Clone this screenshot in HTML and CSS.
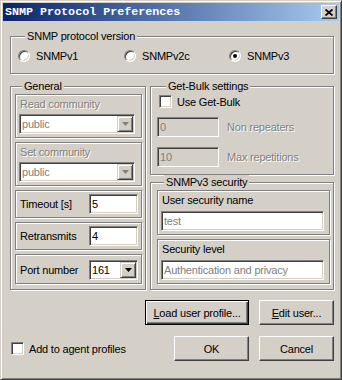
FILE: index.html
```html
<!DOCTYPE html>
<html>

<head>
    <meta charset="UTF-8">
    <title>SNMP Protocol Preferences</title>
    <link rel="stylesheet" href="styles.css">
</head>

<body>
    <div class="window">
        <div class="titlebar">
            <span class="title">SNMP Protocol Preferences</span>
            <span class="close">
                <svg width="8" height="7" viewBox="0 0 8 7">
                    <path d="M0.5 0.5 L7.5 6.5 M7.5 0.5 L0.5 6.5" stroke="#000" stroke-width="1.7" />
                </svg>
            </span>
        </div>

        <div class="client">
            <fieldset class="group version">
                <legend>SNMP protocol version</legend>
                <div class="radios">
                    <label class="option"><span class="radio"></span>SNMPv1</label>
                    <label class="option"><span class="radio"></span>SNMPv2c</label>
                    <label class="option"><span class="radio checked"></span>SNMPv3</label>
                </div>
            </fieldset>

            <div class="middle">
                <fieldset class="group general">
                    <legend>General</legend>
                    <div class="frame stacked first">
                        <span class="muted">Read community</span>
                        <div class="combo wide">
                            <span class="value muted-value">public</span>
                            <span class="drop off"><svg width="7" height="4" viewBox="0 0 7 4"><polygon points="0,0 7,0 3.5,4" /></svg></span>
                        </div>
                    </div>
                    <div class="frame stacked">
                        <span class="muted">Set community</span>
                        <div class="combo wide">
                            <span class="value muted-value">public</span>
                            <span class="drop off"><svg width="7" height="4" viewBox="0 0 7 4"><polygon points="0,0 7,0 3.5,4" /></svg></span>
                        </div>
                    </div>
                    <div class="frame inline">
                        <span>Timeout [s]</span>
                        <div class="edit short">5</div>
                    </div>
                    <div class="frame inline">
                        <span>Retransmits</span>
                        <div class="edit short">4</div>
                    </div>
                    <div class="frame inline port">
                        <span>Port number</span>
                        <div class="combo short">
                            <span class="value">161</span>
                            <span class="drop"><svg width="7" height="4" viewBox="0 0 7 4"><polygon points="0,0 7,0 3.5,4" /></svg></span>
                        </div>
                    </div>
                </fieldset>

                <div class="right-col">
                    <fieldset class="group bulk">
                        <legend>Get-Bulk settings</legend>
                        <label class="check-row"><span class="checkbox"></span>Use Get-Bulk</label>
                        <div class="field-row">
                            <div class="edit off medium">0</div>
                            <span class="muted">Non repeaters</span>
                        </div>
                        <div class="field-row">
                            <div class="edit off medium">10</div>
                            <span class="muted">Max repetitions</span>
                        </div>
                    </fieldset>

                    <fieldset class="group security">
                        <legend>SNMPv3 security</legend>
                        <div class="frame stacked first">
                            <span>User security name</span>
                            <div class="edit full muted-value">test</div>
                        </div>
                        <div class="frame stacked">
                            <span>Security level</span>
                            <div class="edit full muted-value">Authentication and privacy</div>
                        </div>
                    </fieldset>
                </div>
            </div>

            <div class="actions">
                <button class="btn default wide-btn"><u>L</u>oad user profile...</button>
                <button class="btn"><u>E</u>dit user...</button>
            </div>

            <div class="footer">
                <label class="check-row agent"><span class="checkbox"></span>Add to agent profiles</label>
                <div class="spacer"></div>
                <button class="btn">OK</button>
                <button class="btn">Cancel</button>
            </div>
        </div>
    </div>
</body>

</html>
```

FILE: styles.css
```css
* {
    box-sizing: border-box;
}

body {
    margin: 0;
    background: #d4d0c8;
    font-family: "Liberation Sans", Arial, sans-serif;
    font-size: 11px;
    letter-spacing: -0.2px;
    line-height: 14px;
    color: #000;
}

.window {
    width: 342px;
    height: 380px;
    padding: 2px;
    background: #d4d0c8;
    border: 1px solid;
    border-color: #d4d0c8 #404040 #404040 #d4d0c8;
    box-shadow: inset 1px 1px #fff, inset -1px -1px #808080;
}

.titlebar {
    height: 18px;
    display: flex;
    align-items: center;
    justify-content: space-between;
    padding: 0 2px;
    background: linear-gradient(to right, #0a246a, #a6caf0);
}

.title {
    color: #fff;
    font-family: "Liberation Mono", monospace;
    font-weight: bold;
    font-size: 11.7px;
    letter-spacing: 0;
}

.close {
    width: 16px;
    height: 14px;
    display: flex;
    align-items: center;
    justify-content: center;
    background: #d4d0c8;
    border: 1px solid;
    border-color: #fff #404040 #404040 #fff;
    box-shadow: inset -1px -1px #808080;
}

.client {
    padding: 0 5px 0 7px;
}

/* group boxes */
.group {
    margin: 0;
    padding: 0;
    min-width: 0;
    border: 1px solid #808080;
    box-shadow: 1px 1px #fff, inset 1px 1px #fff;
}

.group legend {
    margin-left: 7px;
    padding: 0 2px;
    line-height: 14px;
    background: #d4d0c8;
}

.version {
    margin-top: 8px;
    padding: 0 0 10px 7px;
}

.radios {
    display: grid;
    grid-template-columns: 106px 105px 1fr;
    margin-top: 6px;
    height: 14px;
}

.option {
    display: flex;
    align-items: center;
    gap: 6px;
}

.radio {
    width: 12px;
    height: 12px;
    border-radius: 50%;
    display: flex;
    align-items: center;
    justify-content: center;
    background: #fff;
    border: 1px solid;
    border-color: #808080 #fff #fff #808080;
    box-shadow: inset 1px 1px #404040, inset -1px -1px #d4d0c8;
}

.radio.checked::after {
    content: "";
    width: 4px;
    height: 4px;
    border-radius: 50%;
    background: #000;
}

.middle {
    display: grid;
    grid-template-columns: 136px 184px;
    gap: 4px;
    margin-top: 5px;
    align-items: start;
}

.general {
    padding: 0 3px 5px 4px;
}

.frame {
    border: 1px solid #808080;
    box-shadow: 1px 1px #fff, inset 1px 1px #fff;
    margin-top: 4px;
}

.frame.first {
    margin-top: 1px;
}

.frame.stacked {
    display: flex;
    flex-direction: column;
    align-items: flex-start;
    gap: 3px;
    padding: 2px 4px 3px 3px;
}

.frame.stacked > span {
    padding-left: 1px;
}

.frame.inline {
    display: flex;
    align-items: center;
    justify-content: space-between;
    padding: 3px 3px 3px 4px;
}

.frame.port {
    padding-top: 5px;
}

.muted {
    color: #808080;
    text-shadow: 1px 1px #fff;
}

.muted-value {
    color: #808080;
}

/* sunken controls */
.edit,
.combo {
    height: 20px;
    background: #fff;
    border: 1px solid;
    border-color: #808080 #fff #fff #808080;
    box-shadow: inset 1px 1px #404040, inset -1px -1px #d4d0c8;
}

.edit {
    padding: 0 2px;
    line-height: 18px;
    white-space: nowrap;
}

.edit.off {
    background: #d4d0c8;
    color: #808080;
}

.short {
    width: 49px;
}

.medium {
    width: 62px;
}

.full {
    width: 163px;
}

.combo {
    display: flex;
    align-items: center;
    padding: 1px;
}

.combo.wide {
    width: 116px;
}

.combo .value {
    flex: 1;
    padding-left: 1px;
}

.drop {
    width: 16px;
    height: 16px;
    display: flex;
    align-items: center;
    justify-content: center;
    background: #d4d0c8;
    border: 1px solid;
    border-color: #d4d0c8 #404040 #404040 #d4d0c8;
    box-shadow: inset 1px 1px #fff, inset -1px -1px #808080;
}

.drop svg {
    fill: #000;
}

.drop.off svg {
    fill: #808080;
}

/* right column */
.right-col {
    display: flex;
    flex-direction: column;
}

.bulk {
    padding: 0 0 7px 8px;
}

.check-row {
    display: flex;
    align-items: center;
    gap: 5px;
    height: 13px;
    margin-top: 2px;
}

.checkbox {
    width: 13px;
    height: 13px;
    background: #fff;
    border: 1px solid;
    border-color: #808080 #fff #fff #808080;
    box-shadow: inset 1px 1px #404040, inset -1px -1px #d4d0c8;
}

.field-row {
    display: flex;
    align-items: center;
    gap: 8px;
    margin-top: 9px;
    margin-left: -2px;
}

.field-row+.field-row {
    margin-top: 10px;
}

.security {
    padding: 0 3px 5px 6px;
}

.security .frame.stacked {
    gap: 4px;
}

/* buttons */
.btn {
    width: 75px;
    height: 25px;
    padding: 0;
    font-family: inherit;
    font-size: 11px;
    letter-spacing: -0.2px;
    color: #000;
    background: #d4d0c8;
    border: 1px solid;
    border-color: #fff #404040 #404040 #fff;
    box-shadow: inset -1px -1px #808080;
}

.btn.default {
    border-color: #000;
    box-shadow: inset 1px 1px #fff, inset -1px -1px #404040, inset -2px -2px #808080;
}

.wide-btn {
    width: 104px;
}

.actions {
    display: flex;
    justify-content: flex-end;
    gap: 10px;
    margin-top: 10px;
}

.footer {
    display: flex;
    align-items: center;
    gap: 10px;
    margin-top: 11px;
}

.agent {
    margin: 0 0 0 1px;
    gap: 5px;
}

.spacer {
    flex: 1;
}
```
